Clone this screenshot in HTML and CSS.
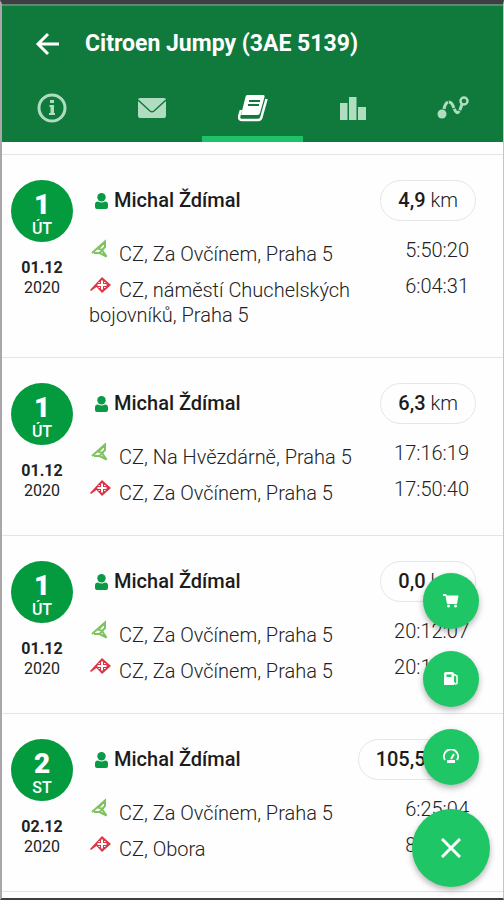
FILE: index.html
```html
<!DOCTYPE html>
<html lang="cs">
	<head>
		<meta charset="utf-8">
		<meta name="viewport" content="width=device-width, initial-scale=1">
		<title>Citroen Jumpy (3AE 5139)</title>
		<link rel="stylesheet" href="styles.css">
	</head>
	<body>
		<svg class="sprite" aria-hidden="true">
			<symbol id="user" viewBox="0 0 13 16">
				<circle cx="6.500" cy="4.200" r="4.200"/>
				<path d="M0 14v-2.500q0-3 3-3 3.500 2 7 0 3 0 3 3V14q0 2-2 2H2q-2 0-2-2z"/>
			</symbol>
			<symbol id="start" viewBox="0 0 22 20">
				<path d="M3 14L16 2.500v5.500l-3 3 4.500 6.500-7-3.500H5M15.500 3L9.500 9.500l4 1.500-3 3" fill="none" stroke="currentColor" stroke-width="2"/>
			</symbol>
			<symbol id="finish" viewBox="0 0 22 20">
				<path d="M1 15l5.500-6L13 2l9 8-9 8-5.500-6L2 16z"/>
				<path d="M13 5.500v9M8.500 10h9" stroke="#fefefe" stroke-width="2"/>
				<path d="M9.500 7.500h1.500M15 7.500h1.500M9.500 12.500h1.500M15 12.500h1.500" stroke="#fefefe" stroke-width="1"/>
			</symbol>
		</svg>
		<header class="top">
			<div class="title">
				<button class="back" type="button" aria-label="Zpět">
					<svg width="24" height="24" viewBox="0 0 24 24"><path d="M24 12H3M13 2L3 12l10 10" fill="none" stroke="currentColor" stroke-width="3"/></svg>
				</button>
				<h1>Citroen Jumpy (3AE 5139)</h1>
			</div>
			<nav class="tabs">
				<a href="#info" aria-label="Info">
					<svg width="30" height="30" viewBox="0 0 30 30"><circle cx="15" cy="15" r="13" fill="none" stroke="currentColor" stroke-width="3"/><path d="M12.500 12h4.500v8h1v2h-6v-2h1.500v-6h-1zM13 7h4v3h-4z"/></svg>
				</a>
				<a href="#zpravy" aria-label="Zprávy">
					<svg width="28" height="22" viewBox="0 0 28 22"><rect x="0" y="1" width="28" height="20" rx="2"/><path d="M0 3l12 11q2 1.500 4 0L28 3" fill="none" stroke="#107a3c" stroke-width="1.500"/></svg>
				</a>
				<a class="active" href="#kniha" aria-label="Kniha jízd">
					<svg width="30" height="28" viewBox="0 0 30 28"><path d="M9 1h16q2 0 1.500 2L22 19q-.5 2-2.500 2H3L7.500 3Q8 1 9 1z"/><path d="M28.500 5l-5 18q-.7 3-3.500 3H4q-4 0-2.500-5L3 16" fill="none" stroke="currentColor" stroke-width="2.500"/><path d="M11 7h11M10 11h11" stroke="#107a3c" stroke-width="2"/></svg>
				</a>
				<a href="#statistiky" aria-label="Statistiky">
					<svg width="26" height="24" viewBox="0 0 26 24"><path d="M0 7h7.500v17H0zM9 1h7.500v23H9zM18 11h8v13h-8z"/></svg>
				</a>
				<a href="#trasa" aria-label="Trasa">
					<svg width="32" height="24" viewBox="0 0 32 24"><circle cx="5" cy="18" r="4.500"/><path d="M7 13c2-9 7-9 9.500-2s5 9 8.500-3" fill="none" stroke="currentColor" stroke-width="3" stroke-dasharray="8 1"/><circle cx="27" cy="5" r="3.500" fill="none" stroke="currentColor" stroke-width="2.500"/></svg>
				</a>
			</nav>
		</header>
		<main>
			<article class="trip">
				<div class="date">
					<div class="day"><b>1</b><span>ÚT</span></div>
					<strong>01.12</strong>
					<span>2020</span>
				</div>
				<div class="detail">
					<div class="head">
						<h2><svg class="user"><use href="#user"/></svg>Michal Ždímal</h2>
						<p class="km"><b>4,9</b> km</p>
					</div>
					<div class="stop">
						<p><svg class="start"><use href="#start"/></svg>CZ, Za Ovčínem, Praha 5</p>
						<time>5:50:20</time>
					</div>
					<div class="stop">
						<p><svg class="finish"><use href="#finish"/></svg>CZ, náměstí Chuchelských bojovníků, Praha 5</p>
						<time>6:04:31</time>
					</div>
				</div>
			</article>
			<article class="trip">
				<div class="date">
					<div class="day"><b>1</b><span>ÚT</span></div>
					<strong>01.12</strong>
					<span>2020</span>
				</div>
				<div class="detail">
					<div class="head">
						<h2><svg class="user"><use href="#user"/></svg>Michal Ždímal</h2>
						<p class="km"><b>6,3</b> km</p>
					</div>
					<div class="stop">
						<p><svg class="start"><use href="#start"/></svg>CZ, Na Hvězdárně, Praha 5</p>
						<time>17:16:19</time>
					</div>
					<div class="stop">
						<p><svg class="finish"><use href="#finish"/></svg>CZ, Za Ovčínem, Praha 5</p>
						<time>17:50:40</time>
					</div>
				</div>
			</article>
			<article class="trip">
				<div class="date">
					<div class="day"><b>1</b><span>ÚT</span></div>
					<strong>01.12</strong>
					<span>2020</span>
				</div>
				<div class="detail">
					<div class="head">
						<h2><svg class="user"><use href="#user"/></svg>Michal Ždímal</h2>
						<p class="km"><b>0,0</b> km</p>
					</div>
					<div class="stop">
						<p><svg class="start"><use href="#start"/></svg>CZ, Za Ovčínem, Praha 5</p>
						<time>20:12:07</time>
					</div>
					<div class="stop">
						<p><svg class="finish"><use href="#finish"/></svg>CZ, Za Ovčínem, Praha 5</p>
						<time>20:12:40</time>
					</div>
				</div>
			</article>
			<article class="trip">
				<div class="date">
					<div class="day"><b>2</b><span>ST</span></div>
					<strong>02.12</strong>
					<span>2020</span>
				</div>
				<div class="detail">
					<div class="head">
						<h2><svg class="user"><use href="#user"/></svg>Michal Ždímal</h2>
						<p class="km"><b>105,5</b> km</p>
					</div>
					<div class="stop">
						<p><svg class="start"><use href="#start"/></svg>CZ, Za Ovčínem, Praha 5</p>
						<time>6:25:04</time>
					</div>
					<div class="stop">
						<p><svg class="finish"><use href="#finish"/></svg>CZ, Obora</p>
						<time>8:02:15</time>
					</div>
				</div>
			</article>
		</main>
		<div class="actions">
			<button type="button" aria-label="Nákup">
				<svg width="16" height="16" viewBox="0 0 16 16"><path d="M0 1h3l1 1.500h11.500L14 11H4L2.500 3H0z"/><circle cx="5.500" cy="13" r="1.500"/><circle cx="12.500" cy="13" r="1.500"/></svg>
			</button>
			<button type="button" aria-label="Tankování">
				<svg width="16" height="16" viewBox="0 0 16 16"><path d="M1 3q0-2 2-2h6q2 0 2 2v11H1z"/><path d="M3.500 3.500h5v2.500h-5z" fill="#1fc665"/><path d="M10 3l4 2v7q0 1-1.500 1T11 11" fill="none" stroke="currentColor" stroke-width="1.500"/></svg>
			</button>
			<button type="button" aria-label="Tachometr">
				<svg width="16" height="16" viewBox="0 0 16 16"><path d="M2 11a7 7 0 1 1 12 0M8 10l3-5" fill="none" stroke="currentColor" stroke-width="2"/><path d="M4 11h8v3H4z"/></svg>
			</button>
			<button class="close" type="button" aria-label="Zavřít">
				<svg width="20" height="20" viewBox="0 0 20 20"><path d="M1 1l18 18M19 1L1 19" stroke="currentColor" stroke-width="3"/></svg>
			</button>
		</div>
	</body>
</html>
```
FILE: styles.css
```css
* {
	box-sizing: border-box;
}

body {
	margin: 0;
	min-height: 100vh;
	border: solid #3f3e45;
	border-width: 4px 1px 2px 2px;
	border-left-color: #a9a7a9;
	border-right-color: #c4c4c4;
	background-color: #fefefe;
	color: #222;
	font: 300 20px/25px Roboto, sans-serif;
}

h1, h2, p {
	margin: 0;
}

svg {
	fill: currentColor;
}

button {
	padding: 0;
	border: 0;
	background: none;
	color: white;
}

.sprite {
	display: none;
}

.top {
	border-top: 2px solid #5d8a6c;
	background-color: #107a3c;
	color: white;
}

.title {
	display: flex;
	align-items: center;
	gap: 26px;
	height: 76px;
	padding-left: 33px;
}

.title h1 {
	font-size: 23px;
	line-height: 28px;
}

.back {
	display: flex;
}

.tabs {
	display: flex;
	height: 60px;
}

.tabs a {
	flex: 1;
	display: flex;
	align-items: center;
	justify-content: center;
	padding-bottom: 3px;
	border-bottom: 6px solid transparent;
	color: #b0dcc0;
}

.tabs .active {
	border-color: #1fc26a;
	color: white;
}

main {
	padding-top: 12px;
}

.trip {
	display: grid;
	grid-template-columns: 62px 1fr;
	gap: 16px;
	padding: 25px 27px 29px 9px;
	border-top: 1px solid #e4e4e4;
}

.trip:last-child {
	border-bottom: 1px solid #e4e4e4;
}

.date {
	display: flex;
	flex-direction: column;
	align-items: center;
	font-size: 16px;
	font-weight: 400;
	line-height: 20px;
}

.date strong {
	color: #222;
}

.day {
	display: flex;
	flex-direction: column;
	align-items: center;
	width: 62px;
	height: 62px;
	margin-bottom: 16px;
	padding-top: 11px;
	border-radius: 50%;
	background-color: #049a3e;
	color: white;
	font-weight: 500;
}

.day b {
	font-size: 28px;
	font-weight: 900;
	line-height: 28px;
}

.head {
	display: flex;
	align-items: center;
	justify-content: space-between;
	height: 41px;
	margin-bottom: 21px;
}

.head h2 {
	display: flex;
	align-items: center;
	color: #1c1c1c;
	font-size: 20px;
	font-weight: 500;
}

.user {
	width: 13px;
	height: 16px;
	margin: 0 6px;
	color: #089a44;
}

.km {
	padding: 7px 17px;
	border: 1px solid #e6e6e6;
	border-radius: 21px;
}

.km b {
	color: #1c1c1c;
	font-weight: 500;
}

.stop {
	display: flex;
	justify-content: space-between;
	gap: 16px;
	padding-right: 7px;
}

.stop + .stop {
	margin-top: 11px;
}

.stop time {
	line-height: 16px;
}

.start, .finish {
	width: 22px;
	height: 20px;
	margin: -6px 8px 2px 0;
	color: #7dc35f;
	vertical-align: baseline;
}

.finish {
	color: #dc3545;
}

.actions {
	position: fixed;
	right: 14px;
	bottom: 13px;
	display: flex;
	flex-direction: column;
	align-items: center;
	gap: 22px;
}

.actions button {
	display: flex;
	align-items: center;
	justify-content: center;
	width: 56px;
	height: 56px;
	border-radius: 50%;
	background-color: #1fc665;
	box-shadow: 0 3px 6px rgba(0, 0, 0, .3);
}

.actions .close {
	width: 78px;
	height: 78px;
	margin-top: 2px;
}
```
